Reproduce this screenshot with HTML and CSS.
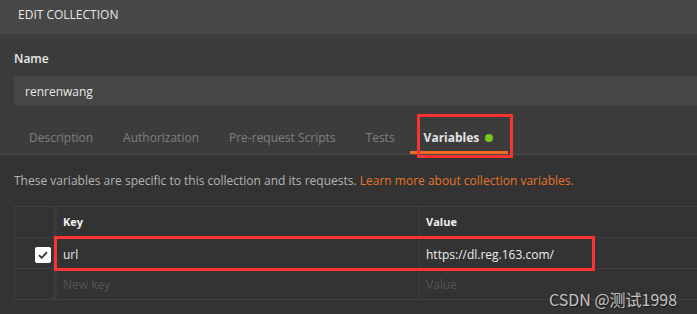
FILE: index.html
```html
<!DOCTYPE html>
<html>
<head>
<meta charset="utf-8">
<link rel="stylesheet" href="styles.css">
</head>
<body>
<div class="page">
  <div class="header">EDIT COLLECTION</div>
  <div class="top">
    <div class="label">Name</div>
    <div class="input">renrenwang</div>
  </div>
  <div class="tabs">
    <div class="tab">Description</div>
    <div class="tab">Authorization</div>
    <div class="tab">Pre-request Scripts</div>
    <div class="tab">Tests</div>
    <div class="tab active">Variables <span class="dot"></span></div>
  </div>
  <div class="lower">
    <p class="desc">These variables are specific to this collection and its requests. <span class="link">Learn more about collection variables.</span></p>
    <div class="table">
      <div class="row head">
        <div class="cell check"></div>
        <div class="cell key">Key</div>
        <div class="cell val">Value</div>
      </div>
      <div class="row">
        <div class="cell check"><span class="box"><svg width="10" height="8" viewBox="0 0 10 8"><path d="M1 4.2 L3.7 6.8 L9 1.2" fill="none" stroke="#333" stroke-width="1.8"/></svg></span></div>
        <div class="cell key text">url</div>
        <div class="cell val text">https://dl.reg.163.com/</div>
      </div>
      <div class="row">
        <div class="cell check"></div>
        <div class="cell key ph">New key</div>
        <div class="cell val ph">Value</div>
      </div>
    </div>
  </div>
  <div class="mark mark-tab"></div>
  <div class="mark mark-row"></div>
  <div class="watermark">CSDN @测试1998</div>
</div>
</body>
</html>
```
FILE: styles.css
```css
html, body {
  margin: 0;
  padding: 0;
  background: #333333;
}
.page {
  position: relative;
  width: 697px;
  height: 314px;
  overflow: hidden;
  font-family: "Open Sans", "Noto Sans", sans-serif;
  background: #333333;
}
.header {
  height: 34px;
  background: #484848;
  color: #e6e6e6;
  font-size: 12px;
  display: flex;
  align-items: center;
  padding-left: 18px;
  padding-bottom: 6px;
  box-sizing: border-box;
}
.top {
  background: #3c3c3c;
  padding: 16px 0 0 14px;
}
.label {
  color: #ececec;
  font-size: 12px;
  font-weight: 600;
  line-height: 18px;
  height: 18px;
}
.input {
  margin-top: 8px;
  height: 30px;
  background: #464646;
  border-radius: 3px 0 0 3px;
  color: #e8e8e8;
  font-size: 12px;
  display: flex;
  align-items: center;
  padding-left: 11px;
}
.tabs {
  background: #3c3c3c;
  height: 48px;
  border-bottom: 1px solid #474747;
  display: flex;
  padding-left: 14px;
}
.tab {
  padding: 0 15px 0 15px;
  color: #7f7f7f;
  font-size: 12px;
  display: flex;
  align-items: center;
  padding-top: 18px;
  box-sizing: border-box;
  height: 48px;
  border-bottom: 3px solid transparent;
}
.tab.active {
  color: #e4e4e4;
  font-weight: 700;
  border-bottom-color: #f26b21;
  padding-left: 14px;
}
.dot {
  display: inline-block;
  width: 8px;
  height: 8px;
  border-radius: 50%;
  background: #7ac51f;
  margin-left: 6px;
}
.lower {
  padding: 0 0 0 14px;
}
.desc {
  margin: 0;
  height: 51px;
  display: flex;
  align-items: center;
  color: #b4b4b4;
  font-size: 12px;
  white-space: pre;
}
.link {
  color: #e8742a;
}
.table {
  border-top: 1px solid #3f3f3f;
  border-left: 1px solid #3f3f3f;
  width: 720px;
}
.row {
  display: flex;
  height: 30px;
  border-bottom: 1px solid #3f3f3f;
}
.cell {
  display: flex;
  align-items: center;
  font-size: 12px;
  box-sizing: border-box;
}
.check {
  width: 42px;
  border-right: 4px solid #393939;
  justify-content: flex-end;
  padding-right: 2px;
}
.key {
  width: 363px;
  border-right: 2px solid #393939;
  padding-left: 6px;
}
.val {
  flex: 1;
  padding-left: 6px;
}
.head .cell {
  font-size: 11px;
  font-weight: 700;
  color: #f0f0f0;
  padding-bottom: 2px;
}
.text {
  color: #ededed;
  font-size: 12px;
  padding-top: 2px;
}
.ph {
  color: #555555;
  font-size: 12px;
}
.box {
  width: 16px;
  height: 16px;
  background: #ffffff;
  border-radius: 2px;
  display: flex;
  align-items: center;
  justify-content: center;
  margin-top: 3px;
}
.mark {
  position: absolute;
  border: 3px solid #fa3434;
  box-sizing: border-box;
}
.mark-tab {
  left: 417px;
  top: 114px;
  width: 96px;
  height: 44px;
}
.mark-row {
  left: 54px;
  top: 236px;
  width: 541px;
  height: 35px;
}
.watermark {
  position: absolute;
  left: 549px;
  top: 288px;
  font-family: "Noto Sans CJK SC", "Noto Sans", sans-serif;
  font-size: 16px;
  color: #c4c4c4;
  text-shadow: 1px 1px 1px rgba(0,0,0,0.5);
  line-height: 22px;
}
```
